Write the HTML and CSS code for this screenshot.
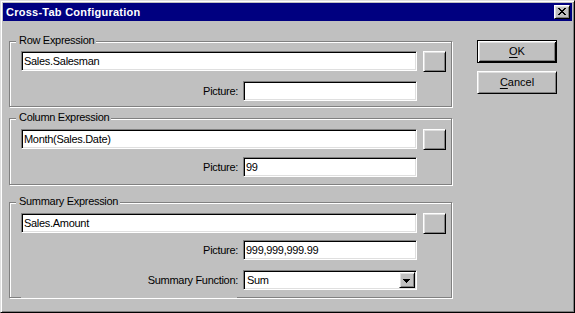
FILE: index.html
```
<!DOCTYPE html>
<html>
<head>
<meta charset="utf-8">
<link rel="stylesheet" href="styles.css">
</head>
<body>
<div class="window">
  <div class="titlebar">
    <span class="title">Cross-Tab Configuration</span>
    <div class="close raised">
      <svg width="8" height="7" viewBox="0 0 8 7" shape-rendering="crispEdges">
        <path d="M0 0h2v1h-2z M6 0h2v1h-2z M1 1h2v1h-2z M5 1h2v1h-2z M2 2h4v1h-4z M3 3h2v1h-2z M2 4h4v1h-4z M1 5h2v1h-2z M5 5h2v1h-2z M0 6h2v1h-2z M6 6h2v1h-2z" fill="#000"/>
      </svg>
    </div>
  </div>
  <div class="content">
    <div class="groups">
      <div class="group g-row">
        <span class="legend">Row Expression</span>
        <div class="line">
          <div class="field wide">Sales.Salesman</div>
          <div class="browse raised"></div>
        </div>
        <div class="pic">
          <span class="label">Picture:</span>
          <div class="field narrow"></div>
        </div>
      </div>
      <div class="group g-col">
        <span class="legend">Column Expression</span>
        <div class="line">
          <div class="field wide">Month(Sales.Date)</div>
          <div class="browse raised"></div>
        </div>
        <div class="pic">
          <span class="label">Picture:</span>
          <div class="field narrow">99</div>
        </div>
      </div>
      <div class="group g-sum">
        <span class="legend">Summary Expression</span>
        <div class="line">
          <div class="field wide">Sales.Amount</div>
          <div class="browse raised"></div>
        </div>
        <div class="pic">
          <span class="label">Picture:</span>
          <div class="field narrow">999,999,999.99</div>
        </div>
        <div class="pic func">
          <span class="label">Summary Function:</span>
          <div class="field narrow combo">
            <span class="combo-text">Sum</span>
            <div class="drop raised">
              <svg width="7" height="4" viewBox="0 0 7 4" shape-rendering="crispEdges">
                <path d="M0 0h7v1h-7z M1 1h5v1h-5z M2 2h3v1h-3z M3 3h1v1h-1z" fill="#000"/>
              </svg>
            </div>
          </div>
        </div>
      </div>
    </div>
    <div class="actions">
      <div class="btn default"><span><u>O</u>K</span></div>
      <div class="btn raised"><span><u>C</u>ancel</span></div>
    </div>
  </div>
</div>
</body>
</html>
```
FILE: styles.css
```
* { box-sizing: border-box; }
html, body { margin: 0; padding: 0; background: #c0c0c0; }
body {
  font-family: "Liberation Sans", Arial, sans-serif;
  font-size: 11px;
  color: #000;
}
.window {
  width: 575px;
  height: 313px;
  background: #c0c0c0;
  border: 1px solid;
  border-color: #dfdfdf #000 #000 #dfdfdf;
  box-shadow: inset 1px 1px #fff, inset -1px -1px #808080;
  padding: 2px;
  display: flex;
  flex-direction: column;
}
.titlebar {
  height: 18px;
  flex: none;
  background: #000080;
  color: #fff;
  display: flex;
  align-items: center;
  justify-content: space-between;
  padding: 0 2px 0 3px;
}
.title {
  font-weight: bold;
  line-height: 13px;
  letter-spacing: 0.25px;
}
.raised {
  background: #c0c0c0;
  border: 1px solid;
  border-color: #fff #000 #000 #fff;
  box-shadow: inset 1px 1px #dfdfdf, inset -1px -1px #808080;
}
.close {
  width: 16px;
  height: 14px;
  padding: 2px 0 0 3px;
  display: flex;
  align-items: flex-start;
}
.close svg { display: block; }
.content {
  display: flex;
  padding: 19px 0 0 6px;
}
.groups {
  width: 443px;
  margin-top: 1px;
  letter-spacing: -0.3px;
}
.group {
  position: relative;
  border: 1px solid #808080;
  box-shadow: 1px 1px #fff, inset 1px 1px #fff;
  padding: 9px 0 5px 11px;
}
.g-col { margin-top: 11px; padding: 10px 0 7px 11px; }
.g-sum { margin-top: 17px; padding: 10px 0 7px 11px; }
.g-sum::after {
  content: "";
  position: absolute;
  left: 11px;
  bottom: -1px;
  width: 216px;
  height: 1px;
  background: #c0c0c0;
}
.legend {
  position: absolute;
  top: -8px;
  left: 6px;
  background: #c0c0c0;
  padding: 0 2px 0 3px;
  line-height: 13px;
  white-space: nowrap;
}
.line {
  display: flex;
  align-items: flex-start;
}
.field {
  height: 20px;
  background: #fff;
  border: 1px solid;
  border-color: #808080 #fff #fff #808080;
  box-shadow: inset 1px 1px #000, inset -1px -1px #dfdfdf;
  padding: 1px 2px;
  line-height: 16px;
  white-space: nowrap;
  overflow: hidden;
}
.wide { width: 396px; }
.browse {
  width: 23px;
  height: 21px;
  margin-left: 6px;
}
.pic {
  display: flex;
  align-items: center;
  justify-content: flex-end;
  width: 396px;
  margin-top: 9px;
}
.g-col .pic { margin-top: 7px; }
.g-sum .pic { margin-top: 6px; }
.g-sum .pic.func { margin-top: 10px; }
.label {
  line-height: 20px;
  margin-right: 5px;
  white-space: nowrap;
}
.narrow { width: 174px; }
.combo {
  display: flex;
  padding: 1px;
}
.combo-text {
  flex: 1;
  padding-left: 2px;
}
.drop {
  width: 16px;
  height: 16px;
  padding: 6px 0 0 3px;
  display: flex;
  align-items: flex-start;
}
.drop svg { display: block; }
.actions {
  margin-left: 25px;
  display: flex;
  flex-direction: column;
  gap: 8px;
}
.btn {
  width: 80px;
  height: 23px;
  display: flex;
  align-items: center;
  justify-content: center;
  line-height: 13px;
}
.btn.default {
  border: 1px solid #000;
  box-shadow: inset 1px 1px #fff, inset -1px -1px #000, inset 2px 2px #dfdfdf, inset -2px -2px #808080;
}
.btn u { text-decoration-thickness: 1px; text-underline-offset: 2px; }
```
